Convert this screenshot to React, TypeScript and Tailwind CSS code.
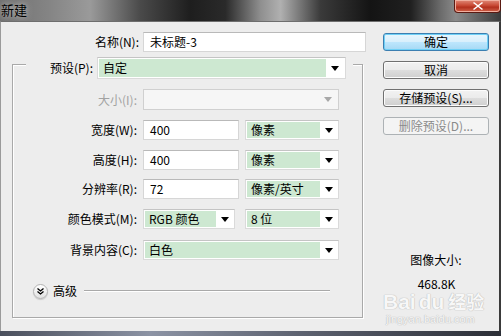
import React from "react";

const btn =
  "h-[18px] w-[106px] flex items-center justify-center rounded-[3px] border text-[12px] leading-none";
const btnNormal =
  "border-[#707070] text-black bg-[linear-gradient(#f2f2f2_0%,#ebebeb_50%,#dddddd_51%,#cfcfcf_100%)] shadow-[inset_0_0_0_1px_#fcfcfc]";

function Arrow({ muted }: { muted?: boolean }) {
  return (
    <svg width="8" height="5" viewBox="0 0 8 5">
      <path d="M0 0h8L4 5z" fill={muted ? "#a8a8a8" : "#000"} />
    </svg>
  );
}

function Field({ value, className }: { value: string; className: string }) {
  return (
    <div
      className={`h-[20px] flex items-center border border-[#d6d6d6] border-t-[#b9b9b9] bg-white pl-[6px] text-[12px] ${className}`}
    >
      {value}
    </div>
  );
}

function Select({
  value,
  className,
  arrowW = "w-[17px]",
}: {
  value: string;
  className: string;
  arrowW?: string;
}) {
  return (
    <div
      className={`h-[20px] flex border border-[#dadada] border-t-[#c4c4c4] bg-white p-px text-[12px] ${className}`}
    >
      <div className="flex-1 flex items-center bg-[#cde8d1] pl-[4px]">{value}</div>
      <div className={`${arrowW} flex items-center justify-center`}>
        <Arrow />
      </div>
    </div>
  );
}

function Label({ text, muted }: { text: string; muted?: boolean }) {
  return (
    <span
      className={`w-[127px] pr-[3px] text-right text-[12px] ${muted ? "text-[#a2a2a2]" : "text-black"}`}
    >
      {text}
    </span>
  );
}

export default function App() {
  return (
    <div className="w-[501px] h-[336px] flex flex-col overflow-hidden bg-[#222] font-['Noto_Sans_CJK_SC','Microsoft_YaHei',sans-serif] leading-[16px]">
      {/* title bar */}
      <div className="h-[21px] shrink-0 relative flex items-start bg-[linear-gradient(90deg,#707070_0%,#858585_10%,#9a9a9a_18%,#4a4a4a_28%,#1e1e1e_38%,#2a2a2a_45%,#8f8f8f_52%,#b0b0b0_56%,#3a3a3a_64%,#141414_74%,#202020_82%,#6c6c6c_88%,#8a8a8a_91%,#3b3b3b_100%)]">
        <span className="pl-[1px] pt-[2px] text-[13px] text-black [text-shadow:0_0_6px_#ddd]">新建</span>
        <div className="ml-auto w-[47px] h-[13px] flex items-center justify-center rounded-b-[4px] border border-t-0 border-[#5a1a12] bg-[linear-gradient(#e08a78_0%,#c84a35_45%,#b2301d_60%,#d0634a_100%)] shadow-[inset_0_0_0_1px_#f0b0a0]">
          <svg width="10" height="8" viewBox="0 0 10 8">
            <path d="M1 0l4 3 4-3 1 1-4 3 4 3-1 1-4-3-4 3-1-1 4-3-4-3z" fill="#fff" />
          </svg>
        </div>
      </div>

      {/* body */}
      <div className="flex-1 relative flex border-t border-[#6e6e6e] border-l border-l-[#9a9a9a] border-r-2 border-r-[#3a3a3a] bg-[#ededed]">
        {/* left */}
        <div className="w-[369px] flex flex-col pt-[10px]">
          <div className="flex items-center h-[20px]">
            <span className="w-[139px] text-right text-[12px] pr-[1px]">名称(N):</span>
            <Field value="未标题-3" className="ml-[3px] w-[223px] h-[19px]" />
          </div>

          <div className="ml-[11px] mt-[12px] w-[351px] h-[254px] border border-[#a9a9a9] shadow-[inset_1px_1px_0_#fff,1px_1px_0_#fff] flex flex-col">
            <div className="-mt-[8px] ml-[13px] w-[327px] h-[22px] flex items-center bg-[#ededed]">
              <span className="w-[69px] pr-[2px] text-right text-[12px]">预设(P):</span>
              <Select value="自定" className="ml-[2px] w-[249px] h-[22px]" arrowW="w-[18px]" />
            </div>

            <div className="mt-[10px] flex items-center h-[21px]">
              <Label text="大小(I):" muted />
              <div className="ml-[3px] w-[196px] h-[21px] flex justify-end items-center border border-[#d0d0d0] bg-[#f6f6f6] pr-[6px]">
                <Arrow muted />
              </div>
            </div>

            <div className="mt-[10px] flex items-center h-[20px]">
              <Label text="宽度(W):" />
              <Field value="400" className="ml-[3px] w-[96px]" />
              <Select value="像素" className="ml-[6px] w-[94px]" />
            </div>
            <div className="mt-[10px] flex items-center h-[20px]">
              <Label text="高度(H):" />
              <Field value="400" className="ml-[3px] w-[96px]" />
              <Select value="像素" className="ml-[6px] w-[94px]" />
            </div>
            <div className="mt-[9px] flex items-center h-[20px]">
              <Label text="分辨率(R):" />
              <Field value="72" className="ml-[3px] w-[96px]" />
              <Select value="像素/英寸" className="ml-[6px] w-[94px]" />
            </div>
            <div className="mt-[10px] flex items-center h-[20px]">
              <Label text="颜色模式(M):" />
              <Select value="RGB 颜色" className="ml-[3px] w-[92px]" />
              <Select value="8 位" className="ml-[10px] w-[94px]" />
            </div>
            <div className="mt-[11px] flex items-center h-[20px]">
              <Label text="背景内容(C):" />
              <Select value="白色" className="ml-[3px] w-[196px]" />
            </div>

            <div className="mt-[23px] ml-[20px] mr-[32px] flex items-center h-[16px]">
              <div className="w-[15px] h-[15px] rounded-full border border-[#b4b4b4] bg-[linear-gradient(#ffffff,#e2e2e2)] shadow-[0_1px_1px_#c8c8c8] flex items-center justify-center">
                <svg width="7" height="7" viewBox="0 0 7 7">
                  <path d="M0.5 0.5l3 2.5 3-2.5M0.5 3.5l3 2.5 3-2.5" stroke="#000" strokeWidth="1.3" fill="none" />
                </svg>
              </div>
              <span className="ml-[5px] text-[12px]">高级</span>
              <div className="ml-[7px] flex-1 h-[2px] border-t border-[#a9a9a9] border-b border-b-white" />
            </div>
          </div>
        </div>

        {/* right */}
        <div className="ml-[13px] w-[106px] flex flex-col pt-[11px]">
          <button className={`${btn} border-[#3c7fb1] text-black bg-[linear-gradient(#e8f6fd_0%,#d8effc_50%,#bde6fd_51%,#a6d9f4_100%)] shadow-[inset_0_0_0_1px_#6fd0f6]`}>
            确定
          </button>
          <button className={`${btn} ${btnNormal} mt-[10px]`}>取消</button>
          <button className={`${btn} ${btnNormal} mt-[10px]`}>存储预设(S)...</button>
          <button className={`${btn} mt-[10px] border-[#adb2b5] bg-[#f4f4f4] text-[#8a8a8a]`}>
            删除预设(D)...
          </button>
          <div className="mt-[117px] text-center text-[12px]">图像大小:</div>
          <div className="mt-[8px] text-center text-[12px] pl-[1px]">468.8K</div>
        </div>

        {/* watermark */}
        <div className="absolute left-[382px] top-[268px] flex flex-col items-start pointer-events-none text-[#f7f7f7] [text-shadow:0_0_1px_#b8b8b8,0_0_1px_#b8b8b8]">
          <span className="text-[21px] font-bold leading-[22px] font-['Liberation_Sans',sans-serif]">
            Bai<span className="ml-[3px]">du</span>
            <span className="ml-[4px] text-[18px] font-['Noto_Sans_CJK_SC',sans-serif]">经验</span>
          </span>
          <span className="ml-[3px] text-[11px] leading-[12px] font-['Liberation_Sans',sans-serif]">jingyan.baidu.com</span>
        </div>
      </div>

      {/* bottom frame */}
      <div className="h-[5px] shrink-0 bg-[linear-gradient(90deg,#4a4f5c,#8c93a4_30%,#5d6270_60%,#2b2e36)]" />
    </div>
  );
}
